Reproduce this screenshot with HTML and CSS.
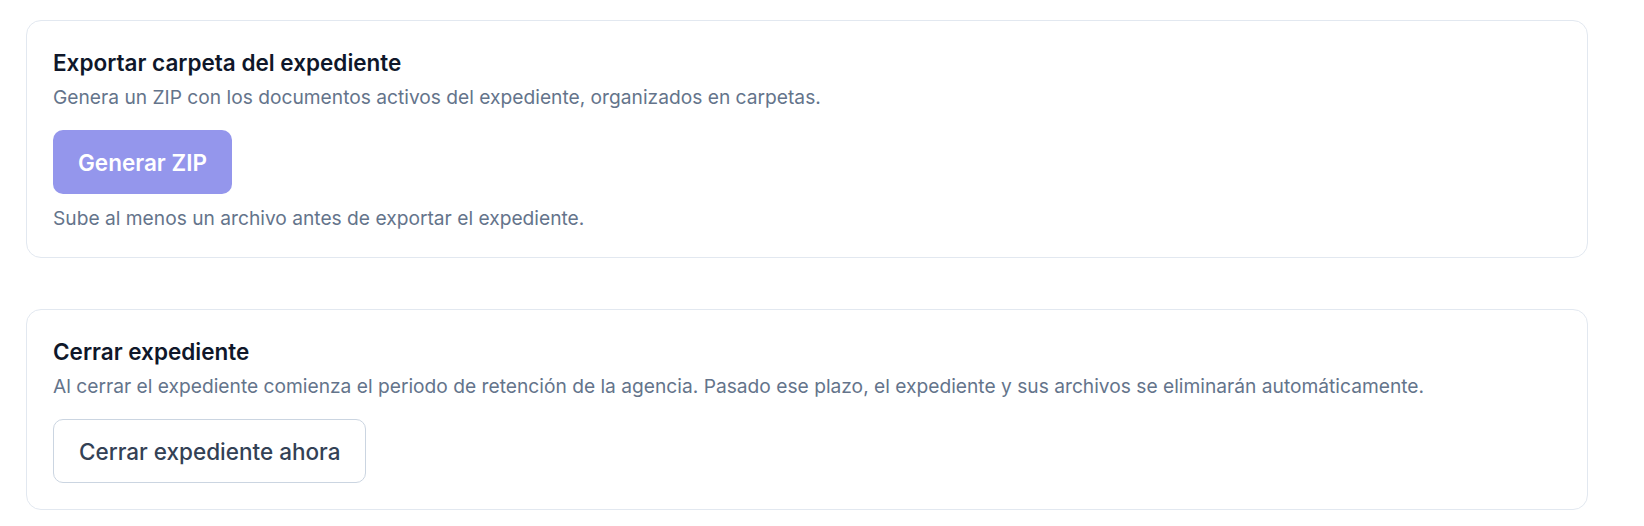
FILE: index.html
```html
<!DOCTYPE html>
<html lang="es">
<head>
<meta charset="utf-8">
<title>Expediente</title>
<link rel="stylesheet" href="styles.css">
</head>
<body>
<main class="page">
  <section class="card">
    <h2 class="card-title">Exportar carpeta del expediente</h2>
    <p class="card-desc">Genera un ZIP con los documentos activos del expediente, organizados en carpetas.</p>
    <button class="btn btn-primary" type="button" disabled>Generar ZIP</button>
    <p class="card-help">Sube al menos un archivo antes de exportar el expediente.</p>
  </section>
  <section class="card">
    <h2 class="card-title">Cerrar expediente</h2>
    <p class="card-desc">Al cerrar el expediente comienza el periodo de retención de la agencia. Pasado ese plazo, el expediente y sus archivos se eliminarán automáticamente.</p>
    <button class="btn btn-outline" type="button">Cerrar expediente ahora</button>
  </section>
</main>
</body>
</html>
```
FILE: styles.css
```css
* { box-sizing: border-box; }
html, body { margin: 0; padding: 0; background: #ffffff; }
body {
  font-family: Inter, "Noto Sans", "Liberation Sans", sans-serif;
  -webkit-font-smoothing: antialiased;
}
.page {
  width: 1562px;
  margin-left: 26px;
  padding-top: 20px;
  display: flex;
  flex-direction: column;
  gap: 51px;
}
.card {
  border: 1px solid #e2e8f0;
  border-radius: 15px;
  background: #ffffff;
  padding: 25px 26px 26px;
  display: flex;
  flex-direction: column;
  align-items: flex-start;
}
.card-title {
  margin: 0;
  font-size: 22.5px;
  line-height: 34px;
  font-weight: 600;
  color: #0f172a;
}
.card-desc {
  margin: 5px 0 0;
  font-size: 19.2px;
  line-height: 25px;
  color: #64748b;
}
.card-help {
  margin: 12px 0 0;
  font-size: 19.2px;
  line-height: 25px;
  color: #64748b;
}
.btn {
  margin-top: 20px;
  height: 64px;
  padding: 0 25px;
  border-radius: 10px;
  font-family: inherit;
  font-size: 22.5px;
  font-weight: 600;
  white-space: nowrap;
  display: inline-flex;
  align-items: center;
  justify-content: center;
  cursor: pointer;
}
.btn-primary {
  background: #9496ec;
  border: none;
  color: #ffffff;
}
.btn-outline {
  background: #ffffff;
  border: 1px solid #cbd5e1;
  color: #334155;
  font-weight: 500;
}
```
